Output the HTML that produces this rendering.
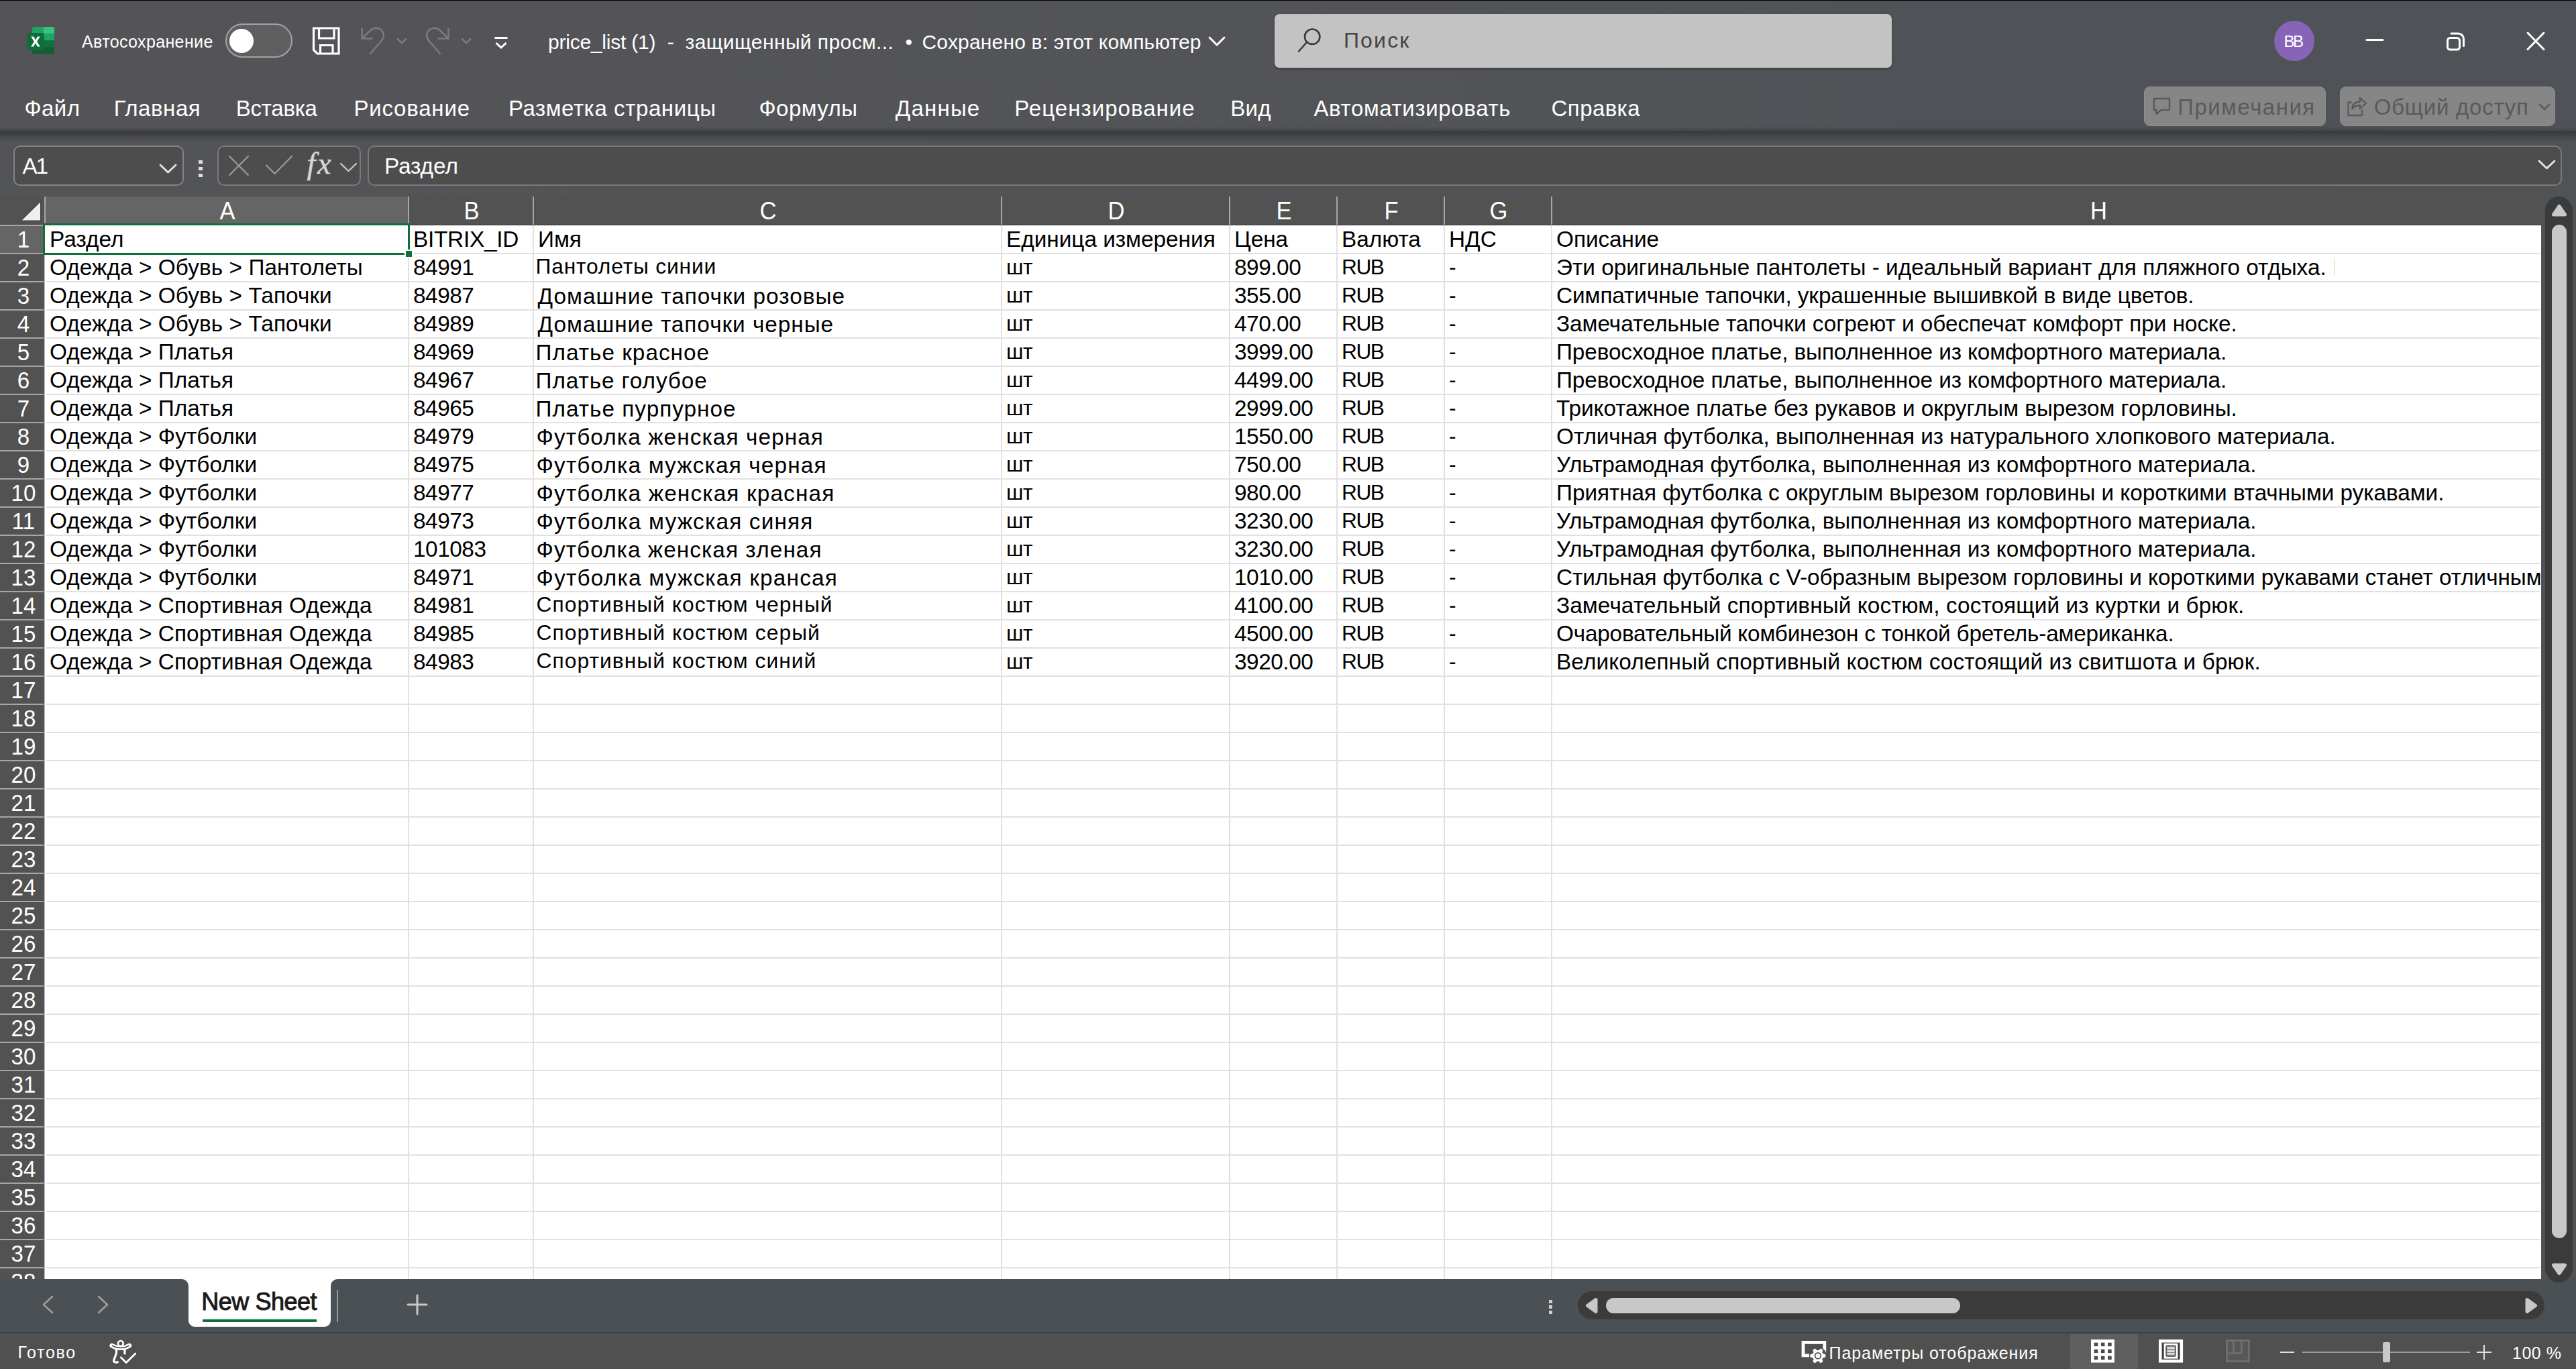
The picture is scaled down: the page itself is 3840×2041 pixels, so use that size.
<!DOCTYPE html>
<html lang="ru"><head><meta charset="utf-8"><title>price_list (1) - Excel</title>
<style>
html,body{margin:0;padding:0;overflow:hidden;}
body{width:3840px;height:2041px;overflow:hidden;background:#535458;font-family:'Liberation Sans',sans-serif;position:relative;color:#fff;}
.a{position:absolute;}
.t{position:absolute;white-space:pre;line-height:1;}
.c{position:absolute;white-space:pre;font-size:33.33px;line-height:42px;height:42px;color:#000;}
.rh{position:absolute;left:1.5px;width:66px;height:40px;text-align:center;font-size:35.2px;line-height:42px;color:#fff;transform:scaleX(.94);transform-origin:33px 0;}
.ch{position:absolute;top:293px;height:42px;text-align:center;font-size:36px;line-height:44px;color:#fff;padding-left:2px;box-sizing:border-box;transform:scaleX(.96);}
.hl{position:absolute;left:69px;width:3717px;height:2px;background:#e1e1e1;}
.vl{position:absolute;top:336px;width:2px;height:1571px;background:#e1e1e1;}
.rl{position:absolute;left:0;width:65px;height:2px;background:#a6a6a6;}
.cl{position:absolute;top:293px;width:2px;height:42px;background:#a6a6a6;}
svg{position:absolute;overflow:visible;}
</style></head><body>

<div class="a" style="left:0;top:0;width:3840px;height:1px;background:#000"></div>
<div class="a" style="left:0;top:1px;width:3840px;height:195px;background:linear-gradient(90deg,#545458 0,#535457 45%,#4f5357 75%,#4f5357 100%)"></div>
<div class="a" style="left:0;top:196px;width:3840px;height:97px;background:linear-gradient(90deg,#535457 0,#525356 50%,#505356 100%)"></div>
<div class="a" style="left:0;top:188px;width:3840px;height:9px;background:linear-gradient(rgba(54,56,58,0) 0,rgba(54,56,58,.25) 50%,rgba(54,56,58,.75) 100%)"></div>
<div class="a" style="left:0;top:196px;width:3840px;height:16px;background:linear-gradient(rgba(52,54,56,1) 0,rgba(54,56,58,.8) 15%,rgba(54,56,58,.45) 45%,rgba(54,56,58,0) 100%)"></div>
<div class="a" style="left:0;top:293px;width:3788px;height:43px;background:#525252"></div>
<div class="a" style="left:0;top:333px;width:3788px;height:3px;background:linear-gradient(#525252,#454545)"></div>
<div class="a" style="left:0;top:336px;width:66px;height:1571px;background:#525252"></div>
<div class="a" style="left:66px;top:336px;width:3722px;height:1571px;background:#fff"></div>
<div class="a" style="left:3788px;top:293px;width:52px;height:1614px;background:#4f5357"></div>
<div class="a" style="left:68px;top:293px;width:540px;height:41px;background:#656565"></div>
<div class="a" style="left:0;top:337px;width:65px;height:40px;background:#656565"></div>
<div class="a" style="left:66px;top:336px;width:1px;height:1571px;background:#c4c4c4"></div>
<div class="hl" style="top:377px"></div>
<div class="hl" style="top:419px"></div>
<div class="hl" style="top:461px"></div>
<div class="hl" style="top:503px"></div>
<div class="hl" style="top:545px"></div>
<div class="hl" style="top:587px"></div>
<div class="hl" style="top:629px"></div>
<div class="hl" style="top:671px"></div>
<div class="hl" style="top:713px"></div>
<div class="hl" style="top:755px"></div>
<div class="hl" style="top:797px"></div>
<div class="hl" style="top:839px"></div>
<div class="hl" style="top:881px"></div>
<div class="hl" style="top:923px"></div>
<div class="hl" style="top:965px"></div>
<div class="hl" style="top:1007px"></div>
<div class="hl" style="top:1049px"></div>
<div class="hl" style="top:1091px"></div>
<div class="hl" style="top:1133px"></div>
<div class="hl" style="top:1175px"></div>
<div class="hl" style="top:1217px"></div>
<div class="hl" style="top:1259px"></div>
<div class="hl" style="top:1301px"></div>
<div class="hl" style="top:1343px"></div>
<div class="hl" style="top:1385px"></div>
<div class="hl" style="top:1427px"></div>
<div class="hl" style="top:1469px"></div>
<div class="hl" style="top:1511px"></div>
<div class="hl" style="top:1553px"></div>
<div class="hl" style="top:1595px"></div>
<div class="hl" style="top:1637px"></div>
<div class="hl" style="top:1679px"></div>
<div class="hl" style="top:1721px"></div>
<div class="hl" style="top:1763px"></div>
<div class="hl" style="top:1805px"></div>
<div class="hl" style="top:1847px"></div>
<div class="hl" style="top:1889px"></div>
<div class="vl" style="left:608px"></div>
<div class="cl" style="left:608px"></div>
<div class="vl" style="left:794px"></div>
<div class="cl" style="left:794px"></div>
<div class="vl" style="left:1492px"></div>
<div class="cl" style="left:1492px"></div>
<div class="vl" style="left:1832px"></div>
<div class="cl" style="left:1832px"></div>
<div class="vl" style="left:1992px"></div>
<div class="cl" style="left:1992px"></div>
<div class="vl" style="left:2152px"></div>
<div class="cl" style="left:2152px"></div>
<div class="vl" style="left:2312px"></div>
<div class="cl" style="left:2312px"></div>
<div class="cl" style="left:66px"></div>
<div class="rl" style="top:335px"></div>
<div class="rl" style="top:377px"></div>
<div class="rl" style="top:419px"></div>
<div class="rl" style="top:461px"></div>
<div class="rl" style="top:503px"></div>
<div class="rl" style="top:545px"></div>
<div class="rl" style="top:587px"></div>
<div class="rl" style="top:629px"></div>
<div class="rl" style="top:671px"></div>
<div class="rl" style="top:713px"></div>
<div class="rl" style="top:755px"></div>
<div class="rl" style="top:797px"></div>
<div class="rl" style="top:839px"></div>
<div class="rl" style="top:881px"></div>
<div class="rl" style="top:923px"></div>
<div class="rl" style="top:965px"></div>
<div class="rl" style="top:1007px"></div>
<div class="rl" style="top:1049px"></div>
<div class="rl" style="top:1091px"></div>
<div class="rl" style="top:1133px"></div>
<div class="rl" style="top:1175px"></div>
<div class="rl" style="top:1217px"></div>
<div class="rl" style="top:1259px"></div>
<div class="rl" style="top:1301px"></div>
<div class="rl" style="top:1343px"></div>
<div class="rl" style="top:1385px"></div>
<div class="rl" style="top:1427px"></div>
<div class="rl" style="top:1469px"></div>
<div class="rl" style="top:1511px"></div>
<div class="rl" style="top:1553px"></div>
<div class="rl" style="top:1595px"></div>
<div class="rl" style="top:1637px"></div>
<div class="rl" style="top:1679px"></div>
<div class="rl" style="top:1721px"></div>
<div class="rl" style="top:1763px"></div>
<div class="rl" style="top:1805px"></div>
<div class="rl" style="top:1847px"></div>
<div class="rl" style="top:1889px"></div>
<div class="a" style="left:0;top:336px;width:66px;height:1571px;overflow:hidden">
<div class="rh" style="top:0px">1</div>
<div class="rh" style="top:42px">2</div>
<div class="rh" style="top:84px">3</div>
<div class="rh" style="top:126px">4</div>
<div class="rh" style="top:168px">5</div>
<div class="rh" style="top:210px">6</div>
<div class="rh" style="top:252px">7</div>
<div class="rh" style="top:294px">8</div>
<div class="rh" style="top:336px">9</div>
<div class="rh" style="top:378px">10</div>
<div class="rh" style="top:420px">11</div>
<div class="rh" style="top:462px">12</div>
<div class="rh" style="top:504px">13</div>
<div class="rh" style="top:546px">14</div>
<div class="rh" style="top:588px">15</div>
<div class="rh" style="top:630px">16</div>
<div class="rh" style="top:672px">17</div>
<div class="rh" style="top:714px">18</div>
<div class="rh" style="top:756px">19</div>
<div class="rh" style="top:798px">20</div>
<div class="rh" style="top:840px">21</div>
<div class="rh" style="top:882px">22</div>
<div class="rh" style="top:924px">23</div>
<div class="rh" style="top:966px">24</div>
<div class="rh" style="top:1008px">25</div>
<div class="rh" style="top:1050px">26</div>
<div class="rh" style="top:1092px">27</div>
<div class="rh" style="top:1134px">28</div>
<div class="rh" style="top:1176px">29</div>
<div class="rh" style="top:1218px">30</div>
<div class="rh" style="top:1260px">31</div>
<div class="rh" style="top:1302px">32</div>
<div class="rh" style="top:1344px">33</div>
<div class="rh" style="top:1386px">34</div>
<div class="rh" style="top:1428px">35</div>
<div class="rh" style="top:1470px">36</div>
<div class="rh" style="top:1512px">37</div>
<div class="rh" style="top:1554px">38</div>
</div>
<div class="ch" style="left:68px;width:540px">A</div>
<div class="ch" style="left:610px;width:184px">B</div>
<div class="ch" style="left:796px;width:696px">C</div>
<div class="ch" style="left:1494px;width:338px">D</div>
<div class="ch" style="left:1834px;width:158px">E</div>
<div class="ch" style="left:1994px;width:158px">F</div>
<div class="ch" style="left:2154px;width:158px">G</div>
<div class="a" style="left:2314px;top:293px;width:1474px;height:42px;overflow:hidden"><div class="ch" style="left:0;top:0;width:1627px">H</div></div>
<svg style="left:30px;top:298px" width="34" height="34"><path d="M2.600 30.600 L30 3.400 L30 30.600 Z" fill="#efefef" stroke="#3f3f3f" stroke-width="1.600" stroke-linejoin="miter" paint-order="stroke"/></svg>
<div class="a" style="left:66px;top:336px;width:3722px;height:1571px;overflow:hidden">
<div class="c" style="left:8px;top:0px;letter-spacing:0.08px;">Раздел</div>
<div class="c" style="left:550px;top:0px;letter-spacing:-0.25px;">BITRIX_ID</div>
<div class="c" style="left:736px;top:0px;">Имя</div>
<div class="c" style="left:1434px;top:0px;">Единица измерения</div>
<div class="c" style="left:1774px;top:0px;">Цена</div>
<div class="c" style="left:1934px;top:0px;">Валюта</div>
<div class="c" style="left:2094px;top:0px;">НДС</div>
<div class="c" style="left:2254px;top:0px;letter-spacing:-0.040px;">Описание</div>
<div class="c" style="left:8px;top:42px;letter-spacing:0.08px;">Одежда &gt; Обувь &gt; Пантолеты</div>
<div class="c" style="left:550px;top:42px;letter-spacing:-0.45px;">84991</div>
<div class="t" style="left:732.6px;top:46.36px;font-size:31.7px;letter-spacing:0.857px;color:#000">Пантолеты синии</div>
<div class="t" style="left:1434px;top:46.87px;font-size:31.7px;letter-spacing:-0.3px;color:#000">шт</div>
<div class="c" style="left:1774px;top:42px;letter-spacing:-0.45px;">899.00</div>
<div class="t" style="left:1934px;top:46.87px;font-size:31.7px;letter-spacing:-1.5px;color:#000">RUB</div>
<div class="t" style="left:2094px;top:46.87px;font-size:31.7px;letter-spacing:0px;color:#000">-</div>
<div class="c" style="left:2254px;top:42px;letter-spacing:0.008px;">Эти оригинальные пантолеты - идеальный вариант для пляжного отдыха.</div>
<div class="c" style="left:8px;top:84px;letter-spacing:0.08px;">Одежда &gt; Обувь &gt; Тапочки</div>
<div class="c" style="left:550px;top:84px;letter-spacing:-0.45px;">84987</div>
<div class="t" style="left:735.6px;top:89.31px;font-size:33.3px;letter-spacing:1.035px;color:#000">Домашние тапочки розовые</div>
<div class="t" style="left:1434px;top:88.87px;font-size:31.7px;letter-spacing:-0.3px;color:#000">шт</div>
<div class="c" style="left:1774px;top:84px;letter-spacing:-0.45px;">355.00</div>
<div class="t" style="left:1934px;top:88.87px;font-size:31.7px;letter-spacing:-1.5px;color:#000">RUB</div>
<div class="t" style="left:2094px;top:88.87px;font-size:31.7px;letter-spacing:0px;color:#000">-</div>
<div class="c" style="left:2254px;top:84px;letter-spacing:-0.068px;">Симпатичные тапочки, украшенные вышивкой в виде цветов.</div>
<div class="c" style="left:8px;top:126px;letter-spacing:0.08px;">Одежда &gt; Обувь &gt; Тапочки</div>
<div class="c" style="left:550px;top:126px;letter-spacing:-0.45px;">84989</div>
<div class="t" style="left:735.6px;top:131.31px;font-size:33.3px;letter-spacing:1.0px;color:#000">Домашние тапочки черные</div>
<div class="t" style="left:1434px;top:130.87px;font-size:31.7px;letter-spacing:-0.3px;color:#000">шт</div>
<div class="c" style="left:1774px;top:126px;letter-spacing:-0.45px;">470.00</div>
<div class="t" style="left:1934px;top:130.87px;font-size:31.7px;letter-spacing:-1.5px;color:#000">RUB</div>
<div class="t" style="left:2094px;top:130.87px;font-size:31.7px;letter-spacing:0px;color:#000">-</div>
<div class="c" style="left:2254px;top:126px;letter-spacing:-0.040px;">Замечательные тапочки согреют и обеспечат комфорт при носке.</div>
<div class="c" style="left:8px;top:168px;letter-spacing:0.08px;">Одежда &gt; Платья</div>
<div class="c" style="left:550px;top:168px;letter-spacing:-0.45px;">84969</div>
<div class="t" style="left:732.6px;top:173.31px;font-size:33.3px;letter-spacing:1.023px;color:#000">Платье красное</div>
<div class="t" style="left:1434px;top:172.87px;font-size:31.7px;letter-spacing:-0.3px;color:#000">шт</div>
<div class="c" style="left:1774px;top:168px;letter-spacing:-0.45px;">3999.00</div>
<div class="t" style="left:1934px;top:172.87px;font-size:31.7px;letter-spacing:-1.5px;color:#000">RUB</div>
<div class="t" style="left:2094px;top:172.87px;font-size:31.7px;letter-spacing:0px;color:#000">-</div>
<div class="c" style="left:2254px;top:168px;letter-spacing:-0.112px;">Превосходное платье, выполненное из комфортного материала.</div>
<div class="c" style="left:8px;top:210px;letter-spacing:0.08px;">Одежда &gt; Платья</div>
<div class="c" style="left:550px;top:210px;letter-spacing:-0.45px;">84967</div>
<div class="t" style="left:732.6px;top:215.31px;font-size:33.3px;letter-spacing:0.915px;color:#000">Платье голубое</div>
<div class="t" style="left:1434px;top:214.87px;font-size:31.7px;letter-spacing:-0.3px;color:#000">шт</div>
<div class="c" style="left:1774px;top:210px;letter-spacing:-0.45px;">4499.00</div>
<div class="t" style="left:1934px;top:214.87px;font-size:31.7px;letter-spacing:-1.5px;color:#000">RUB</div>
<div class="t" style="left:2094px;top:214.87px;font-size:31.7px;letter-spacing:0px;color:#000">-</div>
<div class="c" style="left:2254px;top:210px;letter-spacing:-0.112px;">Превосходное платье, выполненное из комфортного материала.</div>
<div class="c" style="left:8px;top:252px;letter-spacing:0.08px;">Одежда &gt; Платья</div>
<div class="c" style="left:550px;top:252px;letter-spacing:-0.45px;">84965</div>
<div class="t" style="left:732.6px;top:257.31px;font-size:33.3px;letter-spacing:1.027px;color:#000">Платье пурпурное</div>
<div class="t" style="left:1434px;top:256.87px;font-size:31.7px;letter-spacing:-0.3px;color:#000">шт</div>
<div class="c" style="left:1774px;top:252px;letter-spacing:-0.45px;">2999.00</div>
<div class="t" style="left:1934px;top:256.87px;font-size:31.7px;letter-spacing:-1.5px;color:#000">RUB</div>
<div class="t" style="left:2094px;top:256.87px;font-size:31.7px;letter-spacing:0px;color:#000">-</div>
<div class="c" style="left:2254px;top:252px;letter-spacing:-0.040px;">Трикотажное платье без рукавов и округлым вырезом горловины.</div>
<div class="c" style="left:8px;top:294px;letter-spacing:0.08px;">Одежда &gt; Футболки</div>
<div class="c" style="left:550px;top:294px;letter-spacing:-0.45px;">84979</div>
<div class="t" style="left:733.6px;top:299.31px;font-size:33.3px;letter-spacing:1.109px;color:#000">Футболка женская черная</div>
<div class="t" style="left:1434px;top:298.87px;font-size:31.7px;letter-spacing:-0.3px;color:#000">шт</div>
<div class="c" style="left:1774px;top:294px;letter-spacing:-0.45px;">1550.00</div>
<div class="t" style="left:1934px;top:298.87px;font-size:31.7px;letter-spacing:-1.5px;color:#000">RUB</div>
<div class="t" style="left:2094px;top:298.87px;font-size:31.7px;letter-spacing:0px;color:#000">-</div>
<div class="c" style="left:2254px;top:294px;letter-spacing:-0.040px;">Отличная футболка, выполненная из натурального хлопкового материала.</div>
<div class="c" style="left:8px;top:336px;letter-spacing:0.08px;">Одежда &gt; Футболки</div>
<div class="c" style="left:550px;top:336px;letter-spacing:-0.45px;">84975</div>
<div class="t" style="left:733.6px;top:341.31px;font-size:33.3px;letter-spacing:1.168px;color:#000">Футболка мужская черная</div>
<div class="t" style="left:1434px;top:340.87px;font-size:31.7px;letter-spacing:-0.3px;color:#000">шт</div>
<div class="c" style="left:1774px;top:336px;letter-spacing:-0.45px;">750.00</div>
<div class="t" style="left:1934px;top:340.87px;font-size:31.7px;letter-spacing:-1.5px;color:#000">RUB</div>
<div class="t" style="left:2094px;top:340.87px;font-size:31.7px;letter-spacing:0px;color:#000">-</div>
<div class="c" style="left:2254px;top:336px;letter-spacing:-0.040px;">Ультрамодная футболка, выполненная из комфортного материала.</div>
<div class="c" style="left:8px;top:378px;letter-spacing:0.08px;">Одежда &gt; Футболки</div>
<div class="c" style="left:550px;top:378px;letter-spacing:-0.45px;">84977</div>
<div class="t" style="left:733.6px;top:383.31px;font-size:33.3px;letter-spacing:1.17px;color:#000">Футболка женская красная</div>
<div class="t" style="left:1434px;top:382.87px;font-size:31.7px;letter-spacing:-0.3px;color:#000">шт</div>
<div class="c" style="left:1774px;top:378px;letter-spacing:-0.45px;">980.00</div>
<div class="t" style="left:1934px;top:382.87px;font-size:31.7px;letter-spacing:-1.5px;color:#000">RUB</div>
<div class="t" style="left:2094px;top:382.87px;font-size:31.7px;letter-spacing:0px;color:#000">-</div>
<div class="c" style="left:2254px;top:378px;letter-spacing:-0.056px;">Приятная футболка с округлым вырезом горловины и короткими втачными рукавами.</div>
<div class="c" style="left:8px;top:420px;letter-spacing:0.08px;">Одежда &gt; Футболки</div>
<div class="c" style="left:550px;top:420px;letter-spacing:-0.45px;">84973</div>
<div class="t" style="left:733.6px;top:425.31px;font-size:33.3px;letter-spacing:1.2px;color:#000">Футболка мужская синяя</div>
<div class="t" style="left:1434px;top:424.87px;font-size:31.7px;letter-spacing:-0.3px;color:#000">шт</div>
<div class="c" style="left:1774px;top:420px;letter-spacing:-0.45px;">3230.00</div>
<div class="t" style="left:1934px;top:424.87px;font-size:31.7px;letter-spacing:-1.5px;color:#000">RUB</div>
<div class="t" style="left:2094px;top:424.87px;font-size:31.7px;letter-spacing:0px;color:#000">-</div>
<div class="c" style="left:2254px;top:420px;letter-spacing:-0.040px;">Ультрамодная футболка, выполненная из комфортного материала.</div>
<div class="c" style="left:8px;top:462px;letter-spacing:0.08px;">Одежда &gt; Футболки</div>
<div class="c" style="left:550px;top:462px;letter-spacing:-0.45px;">101083</div>
<div class="t" style="left:733.6px;top:467.31px;font-size:33.3px;letter-spacing:1.073px;color:#000">Футболка женская зленая</div>
<div class="t" style="left:1434px;top:466.87px;font-size:31.7px;letter-spacing:-0.3px;color:#000">шт</div>
<div class="c" style="left:1774px;top:462px;letter-spacing:-0.45px;">3230.00</div>
<div class="t" style="left:1934px;top:466.87px;font-size:31.7px;letter-spacing:-1.5px;color:#000">RUB</div>
<div class="t" style="left:2094px;top:466.87px;font-size:31.7px;letter-spacing:0px;color:#000">-</div>
<div class="c" style="left:2254px;top:462px;letter-spacing:-0.040px;">Ультрамодная футболка, выполненная из комфортного материала.</div>
<div class="c" style="left:8px;top:504px;letter-spacing:0.08px;">Одежда &gt; Футболки</div>
<div class="c" style="left:550px;top:504px;letter-spacing:-0.45px;">84971</div>
<div class="t" style="left:733.6px;top:509.31px;font-size:33.3px;letter-spacing:1.226px;color:#000">Футболка мужская крансая</div>
<div class="t" style="left:1434px;top:508.87px;font-size:31.7px;letter-spacing:-0.3px;color:#000">шт</div>
<div class="c" style="left:1774px;top:504px;letter-spacing:-0.45px;">1010.00</div>
<div class="t" style="left:1934px;top:508.87px;font-size:31.7px;letter-spacing:-1.5px;color:#000">RUB</div>
<div class="t" style="left:2094px;top:508.87px;font-size:31.7px;letter-spacing:0px;color:#000">-</div>
<div class="c" style="left:2254px;top:504px;letter-spacing:-0.040px;">Стильная футболка с V-образным вырезом горловины и короткими рукавами станет отличным дополнением</div>
<div class="c" style="left:8px;top:546px;letter-spacing:0.08px;">Одежда &gt; Спортивная Одежда</div>
<div class="c" style="left:550px;top:546px;letter-spacing:-0.45px;">84981</div>
<div class="t" style="left:733.6px;top:550.36px;font-size:31.7px;letter-spacing:1.065px;color:#000">Спортивный костюм черный</div>
<div class="t" style="left:1434px;top:550.87px;font-size:31.7px;letter-spacing:-0.3px;color:#000">шт</div>
<div class="c" style="left:1774px;top:546px;letter-spacing:-0.45px;">4100.00</div>
<div class="t" style="left:1934px;top:550.87px;font-size:31.7px;letter-spacing:-1.5px;color:#000">RUB</div>
<div class="t" style="left:2094px;top:550.87px;font-size:31.7px;letter-spacing:0px;color:#000">-</div>
<div class="c" style="left:2254px;top:546px;letter-spacing:0.094px;">Замечательный спортивный костюм, состоящий из куртки и брюк.</div>
<div class="c" style="left:8px;top:588px;letter-spacing:0.08px;">Одежда &gt; Спортивная Одежда</div>
<div class="c" style="left:550px;top:588px;letter-spacing:-0.45px;">84985</div>
<div class="t" style="left:733.6px;top:592.36px;font-size:31.7px;letter-spacing:1.091px;color:#000">Спортивный костюм серый</div>
<div class="t" style="left:1434px;top:592.87px;font-size:31.7px;letter-spacing:-0.3px;color:#000">шт</div>
<div class="c" style="left:1774px;top:588px;letter-spacing:-0.45px;">4500.00</div>
<div class="t" style="left:1934px;top:592.87px;font-size:31.7px;letter-spacing:-1.5px;color:#000">RUB</div>
<div class="t" style="left:2094px;top:592.87px;font-size:31.7px;letter-spacing:0px;color:#000">-</div>
<div class="c" style="left:2254px;top:588px;letter-spacing:-0.202px;">Очаровательный комбинезон с тонкой бретель-американка.</div>
<div class="c" style="left:8px;top:630px;letter-spacing:0.08px;">Одежда &gt; Спортивная Одежда</div>
<div class="c" style="left:550px;top:630px;letter-spacing:-0.45px;">84983</div>
<div class="t" style="left:733.6px;top:634.36px;font-size:31.7px;letter-spacing:1.073px;color:#000">Спортивный костюм синий</div>
<div class="t" style="left:1434px;top:634.87px;font-size:31.7px;letter-spacing:-0.3px;color:#000">шт</div>
<div class="c" style="left:1774px;top:630px;letter-spacing:-0.45px;">3920.00</div>
<div class="t" style="left:1934px;top:634.87px;font-size:31.7px;letter-spacing:-1.5px;color:#000">RUB</div>
<div class="t" style="left:2094px;top:634.87px;font-size:31.7px;letter-spacing:0px;color:#000">-</div>
<div class="c" style="left:2254px;top:630px;letter-spacing:0.123px;">Великолепный спортивный костюм состоящий из свитшота и брюк.</div>
<div class="a" style="left:3413px;top:50px;width:1px;height:25px;background:#e9c88a"></div>
</div>
<div class="a" style="left:64px;top:333px;width:540.8px;height:40.7px;border:3.5px solid #0f703b"></div>
<div class="a" style="left:603px;top:372px;width:9px;height:9px;background:#0f703b;border:2px solid #fff"></div>
<div class="a" style="left:0;top:1907px;width:3840px;height:81px;background:#4b5054"></div>
<div class="a" style="left:0;top:1986px;width:3840px;height:2px;background:#3e4245"></div>
<div class="a" style="left:0;top:1988px;width:3840px;height:53px;background:#505050"></div>
<div class="a" style="left:3794px;top:293px;width:41px;height:1619px;border-radius:20.5px;background:#3b3b3b"></div>
<svg style="left:3795px;top:293px" width="39" height="1619"><path d="M11.500 27 L20 14.500 L28.500 27 Z" fill="#c8c8c8" stroke="#c8c8c8" stroke-width="5" stroke-linejoin="round"/><path d="M11.500 1593 L20 1605.500 L28.500 1593 Z" fill="#c8c8c8" stroke="#c8c8c8" stroke-width="5" stroke-linejoin="round"/></svg>
<div class="a" style="left:3804px;top:335px;width:22px;height:1511px;border-radius:11px;background:#c8c8c8"></div>
<div class="a" style="left:281px;top:1907px;width:212px;height:71px;background:#fff;border-radius:0 0 9px 9px"></div>
<svg style="left:271px;top:1907px" width="232" height="12"><path d="M0 0 H10 V10 A10 10 0 0 0 0 0 Z" fill="#fff"/><path d="M232 0 H222 V10 A10 10 0 0 1 232 0 Z" fill="#fff"/></svg>
<div class="a" style="left:302px;top:1967px;width:170px;height:4px;background:#0f703b"></div>
<div class="a" style="left:502px;top:1923px;width:2px;height:48px;background:#9a9a9a"></div>
<svg style="left:60px;top:1925px" width="600" height="40" fill="none" stroke-linecap="round" stroke-linejoin="round"><path d="M18 8 L5 20 L18 32" stroke="#9d9d9d" stroke-width="2.6"/><path d="M87 8 L100 20 L87 32" stroke="#9d9d9d" stroke-width="2.6"/><path d="M548 20 H576 M562 6 V34" stroke="#c8c8c8" stroke-width="3"/></svg>
<div class="a" style="left:2309px;top:1938px;width:5px;height:5px;background:#d0d0d0;box-shadow:0 8px 0 #d0d0d0,0 16px 0 #d0d0d0"></div>
<div class="a" style="left:2352px;top:1925px;width:1441px;height:42px;border-radius:21px;background:#3b3b3b"></div>
<svg style="left:2352px;top:1925px" width="1441" height="42"><path d="M27 12.500 L14.500 21.500 L27 30.500 Z" fill="#c8c8c8" stroke="#c8c8c8" stroke-width="5" stroke-linejoin="round"/><path d="M1415 12.500 L1427.500 21.500 L1415 30.500 Z" fill="#c8c8c8" stroke="#c8c8c8" stroke-width="5" stroke-linejoin="round"/></svg>
<div class="a" style="left:2394px;top:1935px;width:528px;height:23px;border-radius:11.5px;background:#c8c8c8"></div>
<svg style="left:40px;top:40px" width="41" height="41" viewBox="0 0 41 41">
<path d="M10 0 H38.5 A2.5 2.5 0 0 1 41 2.5 V38.5 A2.5 2.5 0 0 1 38.5 41 H10.5 A2.5 2.5 0 0 1 8 38.5 V2.5 A2.5 2.5 0 0 1 10.5 0 Z" fill="#185c37"/>
<path d="M10.5 0 H24.5 V10.5 H8 V2.5 A2.5 2.5 0 0 1 10.5 0 Z" fill="#21a366"/>
<path d="M24.5 0 H38.5 A2.5 2.5 0 0 1 41 2.5 V10.5 H24.5 Z" fill="#33c481"/>
<rect x="8" y="10.5" width="16.5" height="10" fill="#0f703b"/>
<rect x="24.5" y="10.5" width="16.500" height="10" fill="#21a366"/>
<rect x="8" y="20.5" width="16.5" height="10" fill="#185c37"/>
<rect x="24.5" y="20.5" width="16.5" height="10" fill="#0f703b"/>
<rect x="0" y="9" width="26" height="26" rx="2.5" fill="#0f6d3a"/>
<path d="M6.2 14.5 H10.2 L13 19.8 L15.9 14.5 H19.7 L15.1 22 L19.9 29.5 H15.8 L12.9 24.2 L10 29.5 H6 L10.9 22 Z" fill="#fff"/>
</svg>
<div class="t" style="left:122.0px;top:49.63px;font-size:25px;color:#fff;letter-spacing:0.362px;">Автосохранение</div>
<div class="a" style="left:336px;top:35px;width:96px;height:47px;border:2px solid #a3a3a3;border-radius:26px;background:#5f5f5f"></div>
<div class="a" style="left:342px;top:43px;width:36px;height:36px;border-radius:50%;background:#fff"></div>
<svg style="left:464px;top:38px" width="46" height="46" viewBox="0 0 46 46" fill="none" stroke="#fff" stroke-width="3.2" stroke-linejoin="miter">
<path d="M3.5 4 H41 V42 H9 L3.5 36.5 Z"/><path d="M11.5 4 V19 H34 V4"/><path d="M13.5 42 V29.5 H32 V42"/></svg>
<svg style="left:530px;top:36px" width="240" height="50" viewBox="0 0 240 50" fill="none" stroke="#7a7b7d" stroke-width="2.6" stroke-linecap="butt" stroke-linejoin="miter">
<path d="M9.5 6 V21.5 H25.5"/><path d="M10 21 L22 9.5 C28 4, 37 5, 40.5 11.5 C44 18, 41 23, 36 28 L21.5 44.5"/>
<path d="M62 21.5 L69 28 L76 21.5"/>
<path d="M138.500 6 V21.500 H122.500"/><path d="M138 21 L126 9.500 C120 4, 111 5, 107.500 11.500 C104 18, 107 23, 112 28 L126.500 44.500"/>
<path d="M158 21.5 L165 28 L172 21.5"/>
<path d="M207.500 20.500 H226.500" stroke="#fff" stroke-width="3"/><path d="M209.5 28 L217 35 L224.5 28" stroke="#fff" stroke-width="3"/>
</svg>
<div class="t" style="left:817.0px;top:48.4px;font-size:30px;color:#fff;letter-spacing:-0.231px;">price_list (1)</div>
<div class="t" style="left:994.7px;top:48.4px;font-size:30px;color:#fff;letter-spacing:0px;">-</div>
<div class="t" style="left:1021.5px;top:48.4px;font-size:30px;color:#fff;letter-spacing:0.417px;">защищенный просм...</div>
<div class="t" style="left:1349.5px;top:48.4px;font-size:30px;color:#fff;letter-spacing:0px;">•</div>
<div class="t" style="left:1374.5px;top:48.4px;font-size:30px;color:#fff;letter-spacing:0.185px;">Сохранено в: этот компьютер</div>
<svg style="left:1800px;top:52px" width="30" height="20" fill="none" stroke="#fff" stroke-width="3" stroke-linecap="round" stroke-linejoin="round"><path d="M3 4 L14 15 L25 4"/></svg>
<div class="a" style="left:1900px;top:21px;width:920px;height:80px;border-radius:7px;background:#c3c3c3;box-shadow:0 0 0 1px #4a4a4c, 0 2px 3px rgba(0,0,0,.35)"></div>
<svg style="left:1930px;top:38px" width="46" height="46" fill="none" stroke="#3a3a3a" stroke-width="2.6" stroke-linecap="round"><circle cx="26.2" cy="16.700" r="11.2"/><path d="M18 25 L6 38.500"/></svg>
<div class="t" style="left:2002.9px;top:43.51px;font-size:32px;color:#444;letter-spacing:2.2px;">Поиск</div>
<div class="a" style="left:3390px;top:31px;width:60px;height:60px;border-radius:50%;background:#8764b8"></div>
<div class="t" style="left:3404.6px;top:50.28px;font-size:24px;color:#fff;letter-spacing:-2.6px;">ВВ</div>
<svg style="left:3520px;top:40px" width="290" height="44" fill="none" stroke="#fff" stroke-width="3" stroke-linecap="round" stroke-linejoin="round">
<path d="M8 19.500 H32"/>
<rect x="128.500" y="16.500" width="18" height="17.500" rx="4"/><path d="M134 10 H144.500 A8 8 0 0 1 152.500 18 V28.500"/>
<path d="M248 9 L272 33.500 M272 9 L248 33.500"/>
</svg>
<div class="t" style="left:36.5px;top:145.46px;font-size:33px;color:#fff;letter-spacing:0.433px;">Файл</div>
<div class="t" style="left:169.7px;top:145.46px;font-size:33px;color:#fff;letter-spacing:0.567px;">Главная</div>
<div class="t" style="left:351.8px;top:145.46px;font-size:33px;color:#fff;letter-spacing:-0.25px;">Вставка</div>
<div class="t" style="left:527.4px;top:145.46px;font-size:33px;color:#fff;letter-spacing:0.8px;">Рисование</div>
<div class="t" style="left:757.9px;top:145.46px;font-size:33px;color:#fff;letter-spacing:0.606px;">Разметка страницы</div>
<div class="t" style="left:1131.5px;top:145.46px;font-size:33px;color:#fff;letter-spacing:0.483px;">Формулы</div>
<div class="t" style="left:1334.8px;top:145.46px;font-size:33px;color:#fff;letter-spacing:1.24px;">Данные</div>
<div class="t" style="left:1512.2px;top:145.46px;font-size:33px;color:#fff;letter-spacing:1.054px;">Рецензирование</div>
<div class="t" style="left:1834.3px;top:145.46px;font-size:33px;color:#fff;letter-spacing:0.25px;">Вид</div>
<div class="t" style="left:1958.4px;top:145.46px;font-size:33px;color:#fff;letter-spacing:0.66px;">Автоматизировать</div>
<div class="t" style="left:2312.6px;top:145.46px;font-size:33px;color:#fff;letter-spacing:0.417px;">Справка</div>
<div class="a" style="left:3196px;top:129px;width:271px;height:59px;border-radius:9px;background:#868686;border:1px solid #8e8e8e;box-sizing:border-box"></div>
<div class="a" style="left:3488px;top:129px;width:321px;height:59px;border-radius:9px;background:#868686;border:1px solid #8e8e8e;box-sizing:border-box"></div>
<svg style="left:3205px;top:140px" width="40" height="40" fill="none" stroke="#5a5a5a" stroke-width="2.400" stroke-linejoin="round"><path d="M6 7 H29 V24 H16.500 L9.500 30 V24 H6 Z"/></svg>
<svg style="left:3495px;top:140px" width="40" height="40" fill="none" stroke="#5a5a5a" stroke-width="2.300" stroke-linejoin="round" stroke-linecap="round"><path d="M9.500 12.500 H5.500 V32 H26 V24.500"/><path d="M11.500 22.500 C11.500 15.500,16 12,23 12 V6 L32 14 L23 22 V17 C18 17,14 18,11.500 22.500 Z"/></svg>
<div class="t" style="left:3246.2px;top:143.06px;font-size:33px;color:#5a5a5a;letter-spacing:1.5px;">Примечания</div>
<div class="t" style="left:3538.7px;top:143.06px;font-size:33px;color:#5a5a5a;letter-spacing:0.773px;">Общий доступ</div>
<svg style="left:3783px;top:153px" width="20" height="14" fill="none" stroke="#5a5a5a" stroke-width="2.600" stroke-linecap="round" stroke-linejoin="round"><path d="M3 3 L10 10 L17 3"/></svg>
<div class="a" style="left:20px;top:217px;width:254px;height:60px;border:2px solid #838383;border-radius:10px;background:#4d4d4d;box-sizing:border-box;"></div>
<div class="a" style="left:324px;top:217px;width:214px;height:60px;border:2px solid #838383;border-radius:10px;background:#4d4d4d;box-sizing:border-box;border-width:2px;border-color:#7a7a7a"></div>
<div class="a" style="left:548px;top:217px;width:3271px;height:60px;border:2px solid #838383;border-radius:10px;background:#4d4d4d;box-sizing:border-box;border-width:2px;border-color:#7a7a7a"></div>
<div class="t" style="left:33.5px;top:230.78px;font-size:33.33px;color:#fff;letter-spacing:-2.2px;">A1</div>
<div class="t" style="left:572.9px;top:230.78px;font-size:33.33px;color:#fff;letter-spacing:-0.04px;">Раздел</div>
<div class="t" style="left:457.4px;top:221.48px;font-size:46px;color:#d6d6d6;letter-spacing:2.8px;font-family:'Liberation Serif',serif;font-style:italic;-webkit-text-stroke:0.5px #d6d6d6;">fx</div>
<svg style="left:234px;top:240px" width="34" height="24" fill="none" stroke="#e6e6e6" stroke-width="2.800" stroke-linecap="round" stroke-linejoin="round"><path d="M5 6 L16.500 17 L28 6"/></svg>
<div class="a" style="left:296px;top:239px;width:6px;height:5px;background:#e0e0e0;box-shadow:0 10px 0 #e0e0e0,0 20px 0 #e0e0e0"></div>
<svg style="left:336px;top:226px" width="200" height="44" fill="none" stroke-linecap="butt" stroke-linejoin="miter">
<path d="M5.500 6.500 L34.500 35.500 M34.500 6.500 L5.500 35.500" stroke="#9a9a9a" stroke-width="2.200"/>
<path d="M60.500 20 L73.500 33 L99.500 6.500" stroke="#9a9a9a" stroke-width="2.200"/>
<path d="M172 18 L183.500 29 L195 18" stroke="#c8c8c8" stroke-width="2.400" stroke-linecap="round" stroke-linejoin="round"/>
</svg>
<svg style="left:3780px;top:234px" width="34" height="24" fill="none" stroke="#e6e6e6" stroke-width="2.800" stroke-linecap="round" stroke-linejoin="round"><path d="M5 6 L16.500 17 L28 6"/></svg>
<div class="t" style="left:300.3px;top:1922.52px;font-size:36px;color:#1b1b1b;letter-spacing:-0.475px;-webkit-text-stroke:1px #1b1b1b;">New Sheet</div>
<div class="t" style="left:26.5px;top:2004.03px;font-size:25px;color:#fff;letter-spacing:1.68px;">Готово</div>
<div class="t" style="left:2726.5px;top:2004.63px;font-size:25px;color:#fff;letter-spacing:0.925px;">Параметры отображения</div>
<div class="t" style="left:3745.0px;top:2004.63px;font-size:25px;color:#fff;letter-spacing:0.5px;">100 %</div>
<svg style="left:150px;top:1990px" width="70" height="51" fill="none" stroke-linecap="round" stroke-linejoin="round">
<path d="M16.800 16.100 C 21 18.600, 25 19.600, 29.800 19.600 C 34.600 19.600, 38.600 18.600, 42.800 16.100" stroke="#fff" stroke-width="6.800"/>
<path d="M17.600 16.400 C 21.500 18.500, 25.300 19.500, 29.800 19.500 C 34.300 19.500, 38.100 18.500, 42 16.400" stroke="#505050" stroke-width="1.700"/>
<circle cx="29.800" cy="12.900" r="3.900" fill="#505050" stroke="#fff" stroke-width="2.700"/>
<path d="M23 21.500 C 24.200 24.200, 23.600 27.200, 22.300 30.800 L 19.800 37.400 C 18.900 40.300, 21.800 42.100, 25.400 40.700" stroke="#fff" stroke-width="3.200"/>
<path d="M35.900 21.500 V 28" stroke="#fff" stroke-width="3.200"/>
<path d="M30.300 33.800 L 38.100 41.600 L 51.800 27.900" stroke="#fff" stroke-width="2.800"/>
</svg>
<svg style="left:2670px;top:1990px" width="70" height="51" fill="none">
<path d="M27 30.900 H18 V11.300 H49.800 V27" stroke="#fff" stroke-width="4.800" stroke-linejoin="miter"/>
<circle cx="39.9" cy="31.3" r="13" fill="#505050"/>
<path d="M30.90 31.30 L48.90 31.30 M35.40 23.51 L44.40 39.09 M44.40 23.51 L35.40 39.09" stroke="#fff" stroke-width="5.400" stroke-linecap="round"/>
<circle cx="39.9" cy="31.3" r="8.300" fill="#fff"/>
<circle cx="39.9" cy="31.3" r="4.400" stroke="#505050" stroke-width="1.800"/>
</svg>
<div class="a" style="left:3086px;top:1989px;width:101px;height:52px;background:#5f5f5f"></div>
<svg style="left:3117.300px;top:1996.600px" width="36" height="36"><rect x="0" y="0" width="35" height="34.500" fill="#fff"/><g fill="#4a4a4a"><rect x="4.7" y="4.7" width="5.600" height="5.400"/><rect x="4.7" y="14.7" width="5.600" height="5.400"/><rect x="4.7" y="24.7" width="5.600" height="5.400"/><rect x="14.9" y="4.7" width="5.600" height="5.400"/><rect x="14.9" y="14.7" width="5.600" height="5.400"/><rect x="14.9" y="24.7" width="5.600" height="5.400"/><rect x="25.1" y="4.7" width="5.600" height="5.400"/><rect x="25.1" y="14.7" width="5.600" height="5.400"/><rect x="25.1" y="24.7" width="5.600" height="5.400"/></g></svg>
<svg style="left:3218px;top:1996.600px" width="37" height="36"><rect x="0" y="0" width="36.100" height="34.500" fill="#fff"/>
<rect x="4.600" y="4.600" width="26.900" height="25.200" fill="#3a3a3a"/><rect x="7.600" y="5.800" width="20.900" height="22.800" fill="#fff"/>
<rect x="11" y="9.200" width="14.100" height="16" rx="1.500" fill="#8a8a8a" stroke="#444" stroke-width="1.200"/>
<path d="M12.500 12.800 H23.600 M12.500 17.200 H23.600 M12.500 21.600 H23.600" stroke="#fff" stroke-width="2"/></svg>
<svg style="left:3318px;top:1997px" width="38" height="36" fill="none" stroke="#707070" stroke-width="2.600"><rect x="1.500" y="1.500" width="33" height="31" fill="#585858"/><path d="M11.500 1.500 V20.500 M23.500 1.500 V20.500 M1.500 20.500 H23.500"/></svg>
<div class="a" style="left:3399px;top:2015px;width:21px;height:2px;background:#e0e0e0"></div>
<div class="a" style="left:3432px;top:2015px;width:250px;height:2px;background:#9b9b9b"></div>
<div class="a" style="left:3552px;top:2001px;width:11px;height:30px;background:#c8c8c8;border-radius:2px"></div>
<div class="a" style="left:3692px;top:2015px;width:22px;height:2px;background:#e0e0e0"></div><div class="a" style="left:3702px;top:2005px;width:2px;height:22px;background:#e0e0e0"></div>
</body></html>
